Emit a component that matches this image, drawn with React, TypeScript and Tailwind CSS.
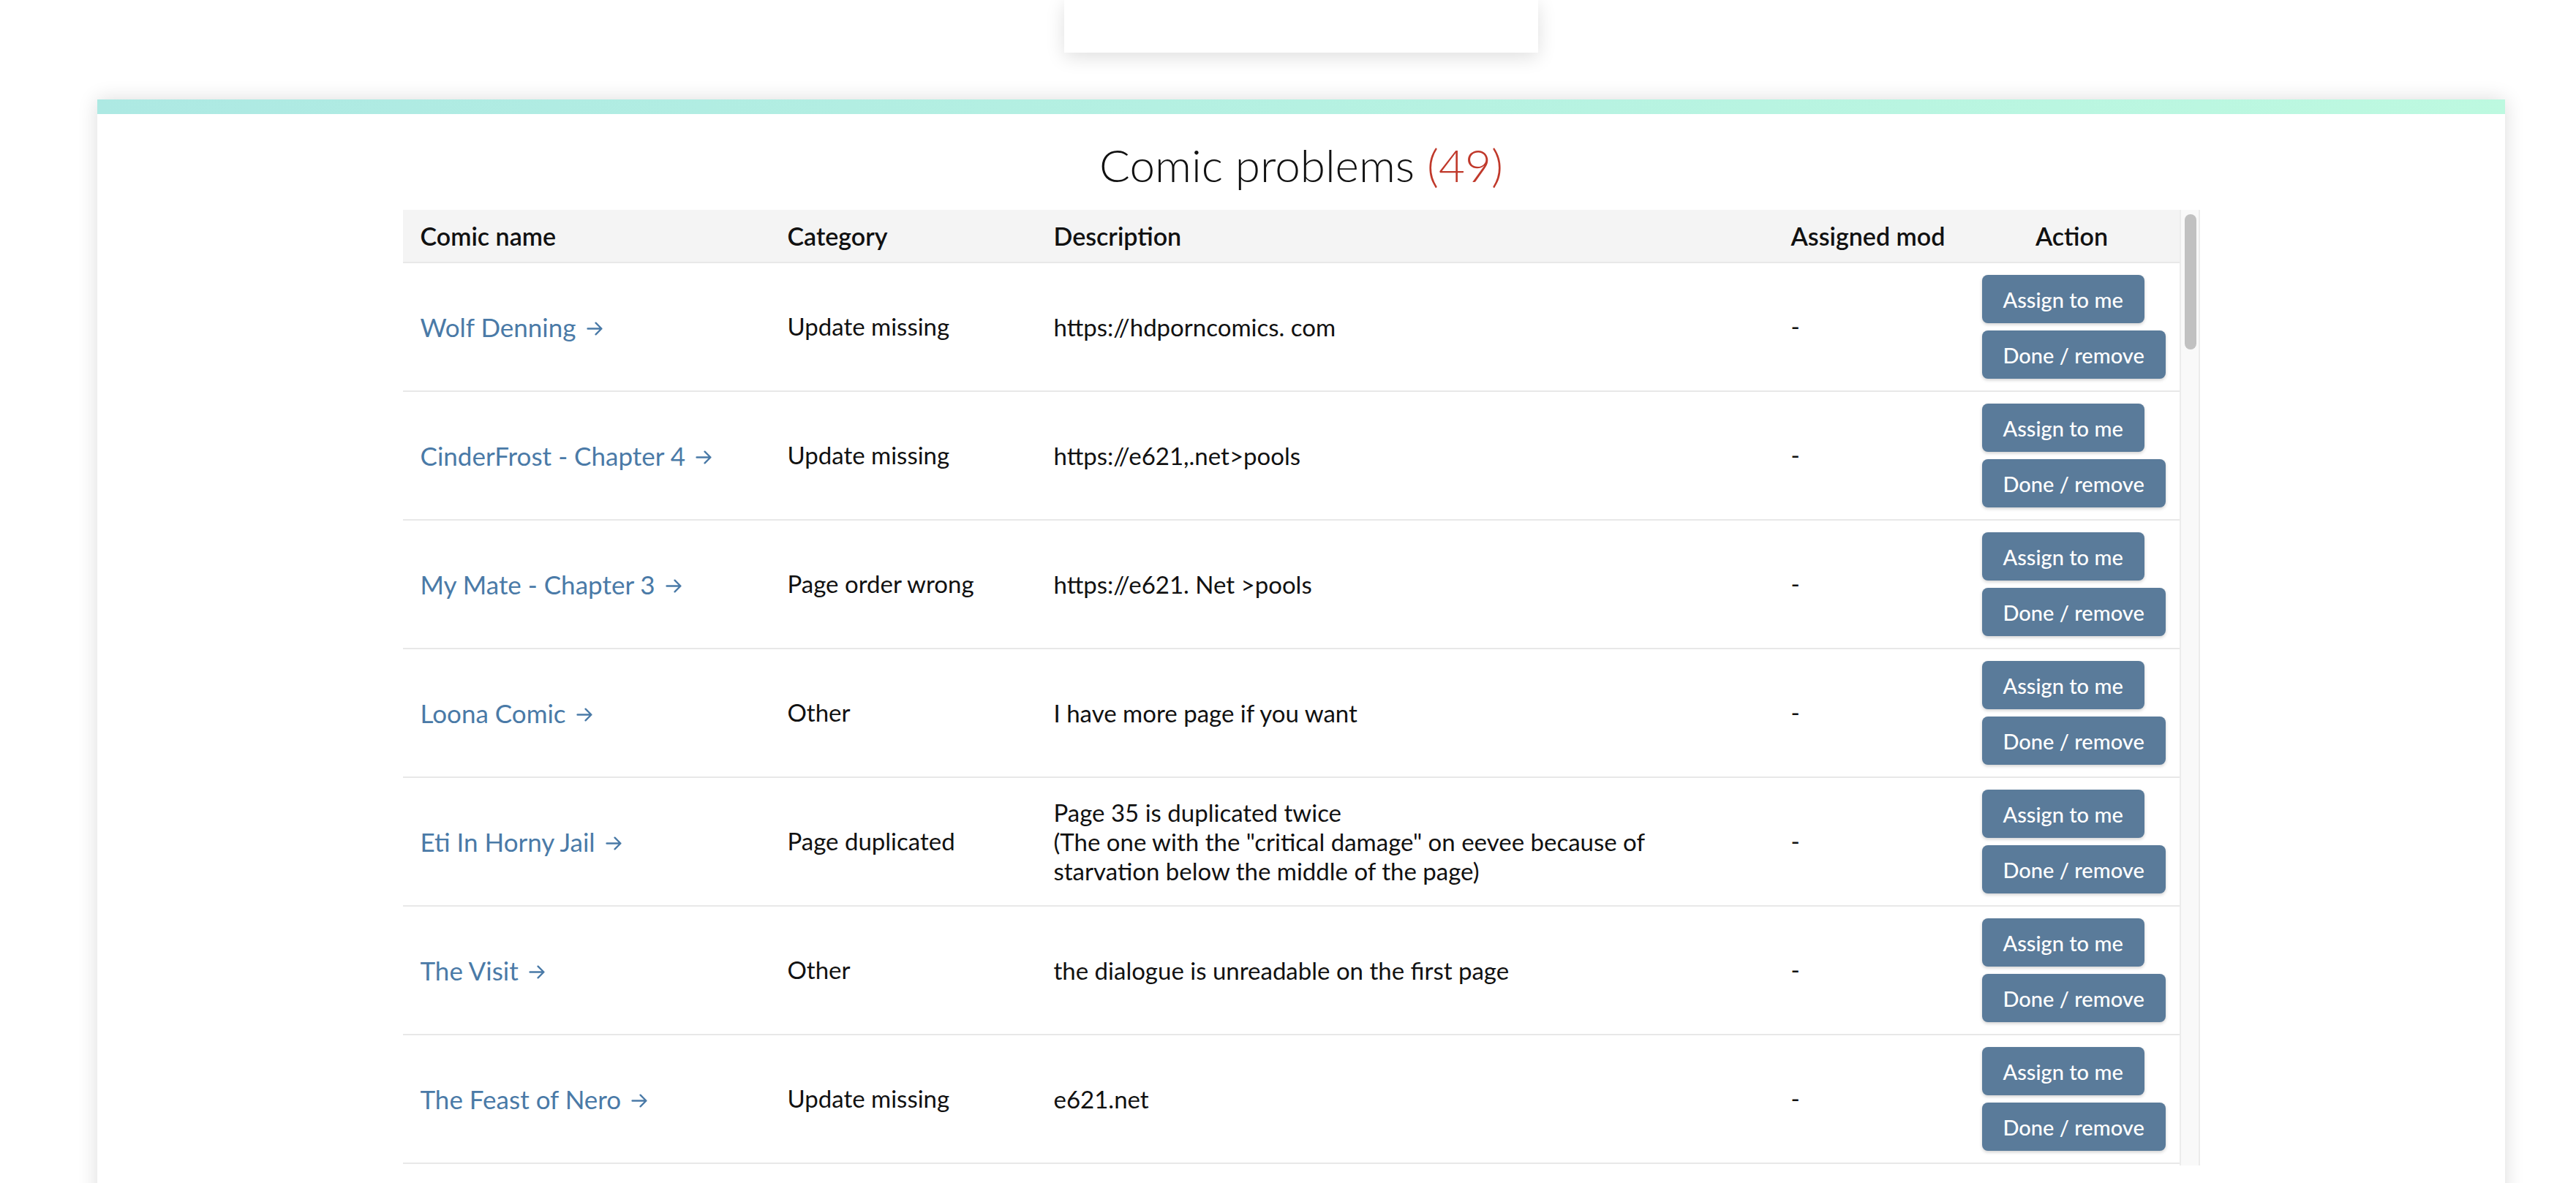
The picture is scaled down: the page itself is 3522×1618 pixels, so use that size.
import React from "react";

type Problem = {
  comic: string;
  category: string;
  description: string;
  mod: string;
};

const problems: Problem[] = [
  { comic: "Wolf Denning", category: "Update missing", description: "https://hdporncomics. com", mod: "-" },
  { comic: "CinderFrost - Chapter 4", category: "Update missing", description: "https://e621,.net>pools", mod: "-" },
  { comic: "My Mate - Chapter 3", category: "Page order wrong", description: "https://e621. Net >pools", mod: "-" },
  { comic: "Loona Comic", category: "Other", description: "I have more page if you want", mod: "-" },
  {
    comic: "Eti In Horny Jail",
    category: "Page duplicated",
    description:
      'Page 35 is duplicated twice\n(The one with the "critical damage" on eevee because of\nstarvation below the middle of the page)',
    mod: "-",
  },
  { comic: "The Visit", category: "Other", description: "the dialogue is unreadable on the first page", mod: "-" },
  { comic: "The Feast of Nero", category: "Update missing", description: "e621.net", mod: "-" },
];

function Arrow() {
  return (
    <svg width="23" height="21" viewBox="0 0 22 20" fill="none" className="inline-block ml-[14px] -mt-[4px]">
      <path d="M1.5 10H19.5M12 2.5L19.5 10L12 17.5" stroke="currentColor" strokeWidth="2.3" strokeLinecap="round" strokeLinejoin="round" />
    </svg>
  );
}

function ActionButton({ children }: { children: React.ReactNode }) {
  return (
    <button className="h-[66px] px-[29px] rounded-[8px] bg-[#5a7b9a] text-white text-[29px] font-medium leading-none whitespace-nowrap shadow-[0_2px_4px_rgba(0,0,0,0.18)]">
      {children}
    </button>
  );
}

export default function App() {
  return (
    <div className="min-h-screen bg-white text-[#111] font-['Lato','Noto_Sans',sans-serif]">
      {/* top card stub */}
      <div className="ml-[1455px] w-[648px] h-[72px] bg-white shadow-[0_6px_26px_rgba(0,0,0,0.13)]" />

      <div className="ml-[133px] mt-[64px] w-[3292px] bg-white shadow-[0_0_26px_rgba(0,0,0,0.14)] pb-[80px]">
        <div className="h-[20px] bg-gradient-to-r from-[#ade9e3] to-[#bdf9e0]" />

        <h1 className="pt-[33px] mb-[26px] text-center text-[62px] leading-[72px] font-light">
          Comic problems <span className="text-[#c0392b]">(49)</span>
        </h1>

        <div className="mx-auto w-[2457px] h-[1307px] flex">
          <div className="flex-1 overflow-hidden">
            <table className="w-[2429px] table-fixed border-collapse text-[33px]">
              <colgroup>
                <col className="w-[502px]" />
                <col className="w-[364px]" />
                <col className="w-[1008px]" />
                <col className="w-[261px]" />
                <col className="w-[294px]" />
              </colgroup>
              <thead>
                <tr className="bg-[#f4f4f4] border-b-2 border-[#e8e8e8] text-[34px]">
                  <th className="h-[72px] px-[24px] text-left font-semibold">Comic name</th>
                  <th className="h-[72px] px-[24px] text-left font-semibold">Category</th>
                  <th className="h-[72px] px-[24px] text-left font-semibold">Description</th>
                  <th className="h-[72px] px-[24px] text-left font-semibold whitespace-nowrap">Assigned mod</th>
                  <th className="h-[72px] px-[24px] text-center font-semibold">Action</th>
                </tr>
              </thead>
              <tbody>
                {problems.map((p, i) => (
                  <tr key={i} className="border-b-2 border-[#e8e8e8]">
                    <td className="px-[24px] py-[16px] align-middle">
                      <a href="#" className="text-[#4a7aa7] text-[35px] whitespace-nowrap">
                        {p.comic}
                        <Arrow />
                      </a>
                    </td>
                    <td className="px-[24px] py-[16px] align-middle">{p.category}</td>
                    <td className="px-[24px] py-[16px] align-middle leading-[40px] whitespace-pre-line">{p.description}</td>
                    <td className="px-[24px] py-[16px] align-middle">{p.mod}</td>
                    <td className="px-[24px] py-[16px] align-middle">
                      <div className="flex flex-col items-start gap-[10px]">
                        <ActionButton>Assign to me</ActionButton>
                        <ActionButton>Done / remove</ActionButton>
                      </div>
                    </td>
                  </tr>
                ))}
              </tbody>
            </table>
          </div>

          {/* scrollbar */}
          <div className="w-[28px] shrink-0 bg-[#f9f9f9] border-x-2 border-[#ececec] pt-[6px] pl-[5px] pr-[3px]">
            <div className="h-[185px] rounded-full bg-[#c1c1c1]" />
          </div>
        </div>
      </div>
    </div>
  );
}
